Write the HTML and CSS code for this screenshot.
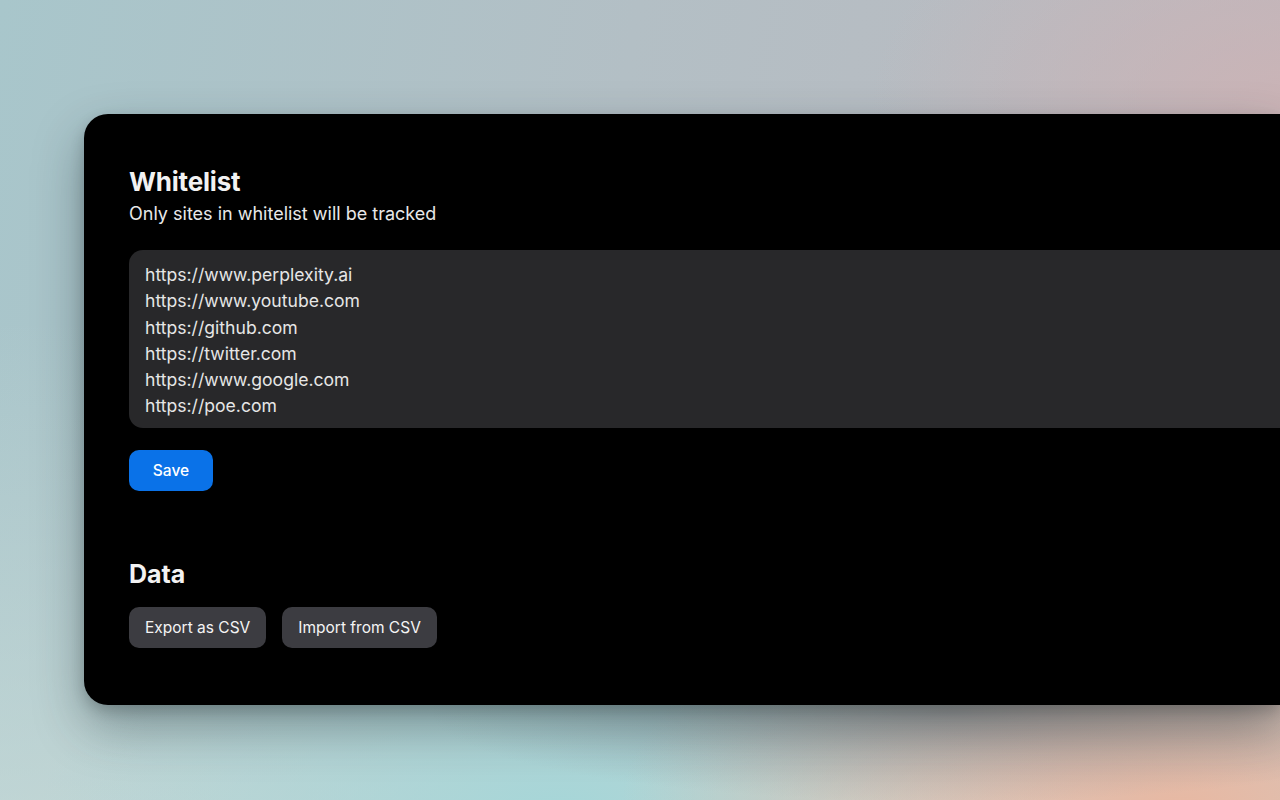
FILE: index.html
```html
<!DOCTYPE html>
<html lang="en">
<head>
<meta charset="utf-8">
<title>Settings</title>
<link rel="stylesheet" href="styles.css">
</head>
<body>
<div class="stage">
  <main class="card">
    <section class="section">
      <h1 class="title">Whitelist</h1>
      <p class="subtitle">Only sites in whitelist will be tracked</p>
      <div class="list-box">
        <div class="line">https://www.perplexity.ai</div>
        <div class="line">https://www.youtube.com</div>
        <div class="line">https://github.com</div>
        <div class="line">https://twitter.com</div>
        <div class="line">https://www.google.com</div>
        <div class="line">https://poe.com</div>
      </div>
      <button class="btn btn-primary">Save</button>
    </section>
    <section class="section section-data">
      <h2 class="title-sm">Data</h2>
      <div class="btn-row">
        <button class="btn btn-secondary">Export as CSV</button>
        <button class="btn btn-secondary">Import from CSV</button>
      </div>
    </section>
  </main>
</div>
</body>
</html>
```

FILE: styles.css
```css
* { box-sizing: border-box; }
html, body {
  margin: 0;
  width: 1280px;
  height: 800px;
  overflow: hidden;
}
body {
  font-family: Inter, "Noto Sans", "Liberation Sans", sans-serif;
  background:
    radial-gradient(ellipse 520px 90px at 950px 712px, rgba(110, 120, 130, 0.45), rgba(110, 120, 130, 0) 100%),
    radial-gradient(ellipse 420px 260px at 1290px 110px, rgba(205, 178, 180, 0.85), rgba(205, 178, 180, 0) 100%),
    radial-gradient(ellipse 560px 260px at 1180px 810px, rgba(232, 184, 162, 1), rgba(232, 184, 162, 0) 100%),
    radial-gradient(ellipse 520px 220px at 560px 810px, rgba(166, 214, 216, 1), rgba(166, 214, 216, 0) 100%),
    linear-gradient(to bottom, rgba(255,255,255,0) 40%, rgba(205, 224, 220, 0.6) 100%),
    linear-gradient(100deg, #a8c6cb 0%, #b3bfc5 45%, #bdb8be 100%);
}
.stage {
  padding: 114px 0 0 84px;
  display: flex;
}
.card {
  flex: 1;
  background: #000;
  border-radius: 24px 0 0 24px;
  padding: 52px 0 57px 45px;
  box-shadow: 0 22px 50px rgba(20, 40, 45, 0.38), 0 6px 14px rgba(0, 0, 0, 0.18);
}
.title {
  margin: 0;
  font-size: 26px;
  line-height: 32px;
  font-weight: 700;
  color: #f2f2f2;
  letter-spacing: -0.2px;
}
.subtitle {
  margin: 4px 0 0 0;
  font-size: 18px;
  line-height: 24px;
  color: #e8e8e8;
}
.list-box {
  margin-top: 24px;
  height: 178px;
  background: #28282a;
  border-radius: 14px 0 0 14px;
  padding: 12px 16px;
}
.line {
  font-size: 17.6px;
  line-height: 26.3px;
  color: #e6e6e6;
}
.btn {
  font-family: inherit;
  border: none;
  height: 41px;
  border-radius: 10px;
  font-size: 15.5px;
  padding: 0 16px;
  color: #f4f4f4;
  cursor: pointer;
}
.btn-primary {
  margin-top: 22px;
  width: 84px;
  background: #0a72e8;
  color: #fff;
  font-weight: 500;
}
.btn-secondary {
  background: #3c3c41;
}
.section-data {
  margin-top: 68px;
}
.title-sm {
  margin: 0;
  font-size: 25px;
  line-height: 30px;
  font-weight: 700;
  color: #f2f2f2;
}
.btn-row {
  margin-top: 18px;
  display: flex;
  gap: 16px;
}
```
